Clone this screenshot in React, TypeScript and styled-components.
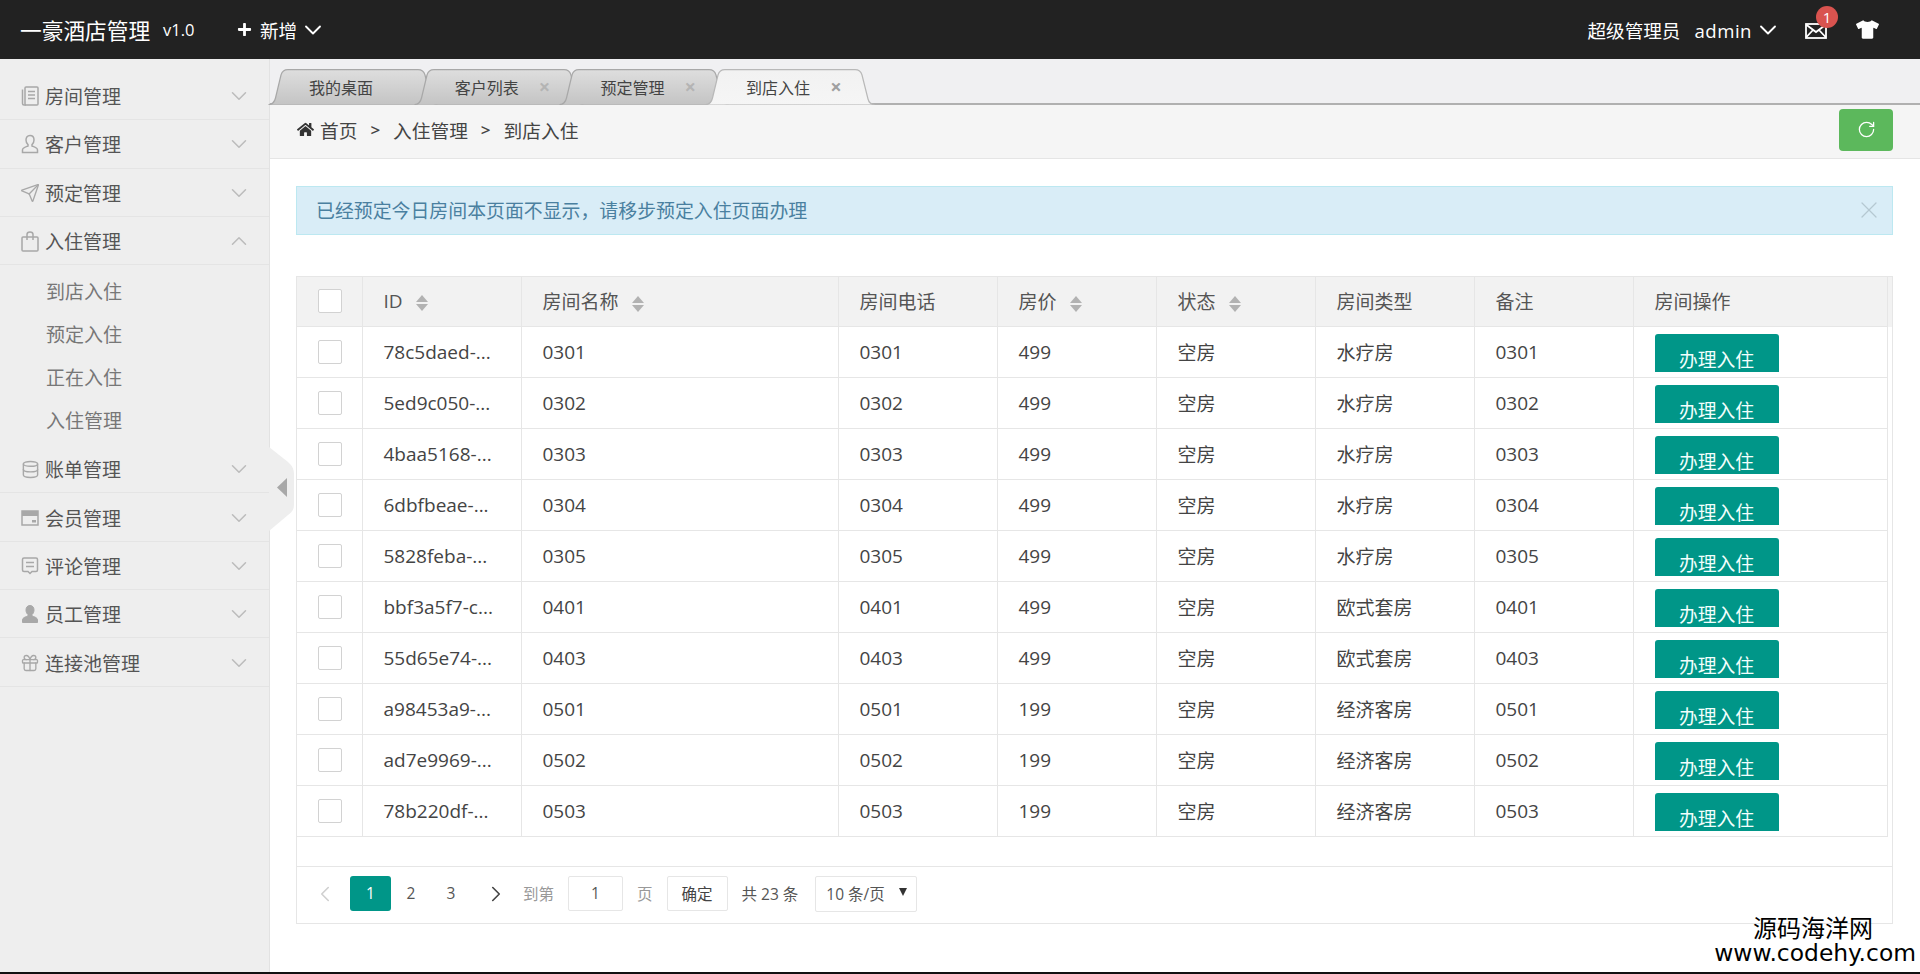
import React, { useId } from "react";
import styled, { createGlobalStyle } from "styled-components";
import {
  ChevronDown,
  ChevronLeft,
  ChevronRight,
  ChevronUp,
  Database,
  Gift,
  RotateCw,
  Send,
  X,
} from "lucide-react";
import { FaHome, FaPlus, FaTshirt } from "react-icons/fa";

const GlobalStyle = createGlobalStyle`
  html, body {
    margin: 0;
    padding: 0;
    background: #fff;
  }
  body {
    font-family: "Open Sans", "Noto Sans CJK SC", sans-serif;
    color: #555;
  }
  * {
    box-sizing: border-box;
  }
`;

const Page = styled.div`
  height: 974px;
  display: flex;
  flex-direction: column;
  border-bottom: 2px solid #111;
  overflow: hidden;
  position: relative;
`;

const Header = styled.header`
  height: 59px;
  flex: none;
  background: #222;
  color: #fff;
  display: flex;
  align-items: center;
  padding: 0 41px 0 20px;
`;

const Logo = styled.div`
  font-size: 21.7px;
  width: 143px;
  white-space: nowrap;
`;

const Version = styled.div`
  font-size: 16.500px;
  width: 74px;
`;

const HeaderLink = styled.div`
  display: flex;
  align-items: center;
  font-size: 18.6px;
  gap: 2px;
`;

const HeaderPlus = styled(FaPlus)`
  margin-right: 6px;
`;

const Spacer = styled.div`
  flex: 1;
`;

const UserName = styled.span`
  margin-left: 14px;
  letter-spacing: 0.5px;
`;

const MailWrap = styled.div`
  position: relative;
  width: 22px;
  height: 16px;
  margin-left: 23px;
`;

const Badge = styled.span`
  position: absolute;
  left: 11px;
  top: -16px;
  width: 22px;
  height: 22px;
  border-radius: 50%;
  background: #d9534f;
  color: #fff;
  font-size: 15px;
  line-height: 22px;
  text-align: center;
`;

const Shirt = styled(FaTshirt)`
  margin-left: 29px;
  font-size: 23px;
`;

const Body = styled.div`
  flex: 1;
  display: flex;
  min-height: 0;
`;

const Sidebar = styled.nav`
  width: 270px;
  flex: none;
  background: #eee;
  border-right: 1px solid #e2e2e2;
  padding-top: 13px;
`;

const MenuItem = styled.div`
  height: 48.3px;
  display: flex;
  align-items: center;
  padding: 1px 17px 0 21px;
  border-bottom: 1px solid #e4e4e4;
  font-size: 19px;
  color: #555;
`;

const MenuIcon = styled.span`
  width: 18px;
  height: 20px;
  flex: none;
  display: flex;
  align-items: center;
  justify-content: center;
  color: #a8a8a8;
  svg {
    flex: none;
  }
`;

const MenuChevron = styled.span`
  display: flex;
  color: #bcbcbc;
`;

const MenuLabel = styled.span`
  margin-left: 6px;
  flex: 1;
`;

const SubMenu = styled.div`
  padding: 6px 0 2px;
`;

const SubItem = styled.div`
  height: 43px;
  line-height: 43px;
  padding-left: 46px;
  font-size: 19px;
  color: #777;
`;

const Main = styled.main`
  flex: 1;
  min-width: 0;
  position: relative;
`;

const CollapseHandle = styled.svg`
  position: absolute;
  left: -1px;
  top: 388px;
`;

const TabBar = styled.div`
  height: 46px;
  background: #f0f0f2;
  border-bottom: 2px solid #b0b0b0;
  padding: 10px 0 0 0;
  display: flex;
`;

const TabItem = styled.div<{ $active?: boolean; $first?: boolean }>`
  position: relative;
  width: 170px;
  height: 36px;
  flex: none;
  margin-left: ${(p) => (p.$first ? "-2px" : "-24.3px")};
  z-index: ${(p) => (p.$active ? 5 : 1)};
  display: flex;
  align-items: center;
  padding: 0 0 0 41px;
  font-size: 16px;
  color: #444;
`;

const TabShapeSvg = styled.svg`
  position: absolute;
  left: 0;
  top: 0;
`;

const TabText = styled.span`
  position: relative;
`;

const TabClose = styled.span<{ $active?: boolean }>`
  position: relative;
  margin-left: 20px;
  font-size: 20px;
  line-height: 1;
  font-weight: bold;
  color: ${(p) => (p.$active ? "#a0a0a0" : "#b4b4b4")};
`;

const Crumbs = styled.div`
  height: 54px;
  background: #f5f5f5;
  border-bottom: 1px solid #e5e5e5;
  padding: 0 27px 4px;
  display: flex;
  align-items: center;
  font-size: 18.7px;
  color: #444;
`;

const CrumbSep = styled.span`
  margin: 0 13px;
  font-size: 17px;
  font-weight: 600;
`;

const CrumbHome = styled(FaHome)`
  font-size: 17px;
  margin-right: 6px;
  color: #333;
`;

const RefreshButton = styled.button`
  width: 54px;
  height: 42px;
  border: 0;
  border-radius: 4px;
  background: #5cb85c;
  color: #fff;
  display: flex;
  align-items: center;
  justify-content: center;
  margin-left: auto;
  padding: 0;
`;

const Content = styled.div`
  padding: 27px 27px 0 26px;
`;

const Alert = styled.div`
  height: 49px;
  background: #d9edf7;
  border: 1px solid #bce8f1;
  color: #4a80a0;
  font-size: 18.9px;
  display: flex;
  align-items: center;
  justify-content: space-between;
  padding: 0 9px 1px 19px;
  svg {
    color: #b5c8d2;
  }
`;

const TableBox = styled.div`
  margin-top: 41px;
  border: 1px solid #e6e6e6;
  border-top: 0;
  width: 1597px;
`;

const HeadWrap = styled.div`
  background: #f2f2f2;
  border-top: 1px solid #e6e6e6;
`;

const BodyWrap = styled.div`
  height: 540px;
  border-bottom: 1px solid #e6e6e6;
`;

const Table = styled.table`
  table-layout: fixed;
  border-collapse: collapse;
  width: 1590px;
`;

const Col = styled.col<{ $w: number }>`
  width: ${(p) => p.$w}px;
`;

const Th = styled.th`
  height: 49px;
  padding: 0 0 0 21px;
  text-align: left;
  font-weight: normal;
  font-size: 19px;
  color: #555;
  border: 1px solid #e6e6e6;
  border-top: 0;
  border-left: 0;
  white-space: nowrap;
`;

const Td = styled.td`
  height: 51px;
  padding: 0 0 0 21px;
  font-size: 19px;
  color: #444;
  border: 1px solid #e6e6e6;
  border-left: 0;
  border-top: 0;
  white-space: nowrap;
  overflow: hidden;
`;

const CheckCell = styled.div`
  width: 24px;
  height: 24px;
  background: #fff;
  border: 1px solid #d2d2d2;
  border-radius: 2px;
`;

const SortCaret = styled.span`
  display: inline-flex;
  flex-direction: column;
  gap: 2px;
  margin: -8px 0 -8px 13px;
  vertical-align: middle;
  &::before,
  &::after {
    content: "";
    width: 0;
    height: 0;
    border-left: 6.5px solid transparent;
    border-right: 6.5px solid transparent;
  }
  &::before {
    border-bottom: 7px solid #b2b2b2;
  }
  &::after {
    border-top: 7px solid #b2b2b2;
  }
`;

const ActionClip = styled.div`
  height: 38px;
  overflow: hidden;
  width: 124px;
  margin-top: 2px;
  border-radius: 3px 3px 0 0;
`;

const ActionButton = styled.button`
  display: block;
  width: 124px;
  height: 52px;
  border: 0;
  padding: 0;
  background: #009688;
  color: #f2fffd;
  font: inherit;
  font-size: 18.8px;
  line-height: 52px;
`;

const PageBar = styled.div`
  height: 56px;
  display: flex;
  align-items: center;
  padding: 0 0 2px 22px;
  font-size: 15.5px;
  color: #555;
`;

const PrevIcon = styled(ChevronLeft)`
  color: #d0d0d0;
  margin-left: -7px;
`;

const PageList = styled.div`
  display: flex;
  align-items: center;
  margin-left: 12px;
`;

const PageNum = styled.span<{ $current?: boolean }>`
  width: ${(p) => (p.$current ? 41 : 40)}px;
  height: 35px;
  line-height: 35px;
  text-align: center;
  border-radius: 3px;
  background: ${(p) => (p.$current ? "#009688" : "transparent")};
  color: ${(p) => (p.$current ? "#fff" : "#555")};
`;

const NextIcon = styled(ChevronRight)`
  color: #444;
  margin-left: 12px;
`;

const SkipGroup = styled.div`
  display: flex;
  align-items: center;
  gap: 14px;
  margin-left: 14px;
`;

const Muted = styled.span`
  color: #999;
`;

const PageInput = styled.div`
  width: 55px;
  height: 35px;
  line-height: 33px;
  border: 1px solid #e6e6e6;
  border-radius: 2px;
  text-align: center;
`;

const ConfirmButton = styled.div`
  width: 61px;
  height: 35px;
  line-height: 34px;
  border: 1px solid #e6e6e6;
  border-radius: 2px;
  text-align: center;
  color: #444;
`;

const SizeSelect = styled.div`
  width: 102px;
  height: 36px;
  border: 1px solid #e6e6e6;
  border-radius: 2px;
  display: flex;
  align-items: center;
  justify-content: space-between;
  padding: 0 9px 0 10px;
  margin-left: 3px;
`;

const Caret = styled.span`
  width: 0;
  height: 0;
  border-left: 4.500px solid transparent;
  border-right: 4.500px solid transparent;
  border-top: 8px solid #333;
  margin-top: -4px;
`;

const Watermark = styled.div`
  position: absolute;
  right: 4px;
  bottom: 7px;
  color: #000;
  text-align: right;
  pointer-events: none;
`;

const WatermarkCn = styled.div`
  font-size: 24px;
  line-height: 26px;
  margin-right: 43px;
`;

const WatermarkUrl = styled.div`
  font-family: "DejaVu Sans", sans-serif;
  font-size: 23.4px;
  line-height: 24px;
`;

const TabShape = ({ active }: { active?: boolean }) => {
  const id = useId();
  return (
    <TabShapeSvg width="170" height="36" viewBox="0 0 170 36">
      <defs>
        <linearGradient id={id} x1="0" y1="0" x2="0" y2="1">
          <stop offset="0" stopColor={active ? "#f2f2f2" : "#dedede"} />
          <stop offset="1" stopColor={active ? "#f5f5f5" : "#c4c4c4"} />
        </linearGradient>
      </defs>
      <path
        d="M0.5 35.5C5 35.5 6.500 33 7.500 29L13 6Q14.500 0.700 20 0.700L150 0.700Q155.500 0.700 157 6L163 30Q164.500 35.500 169.500 35.500"
        fill={`url(#${id})`}
        stroke={active ? "#b8b8b8" : "#a8a8a8"}
        strokeWidth="1.2"
      />
    </TabShapeSvg>
  );
};

const MailIcon = () => (
  <svg width="22" height="16" viewBox="0 0 22 16" fill="none" stroke="#fff" strokeWidth="1.8">
    <rect x="1" y="1" width="20" height="14" />
    <path d="M1 1.500L11 9L21 1.500M1 14.500L8 7M21 14.500L14 7" />
  </svg>
);

const DocIcon = () => (
  <svg width="18" height="20" viewBox="0 0 18 20" fill="none" stroke="currentColor" strokeWidth="1.5">
    <rect x="4" y="1" width="13" height="18" rx="1" />
    <path d="M1.500 3.500V17.500Q1.500 19 3 19H5M7 5.500H14M7 9H14M7 12.500H14" />
  </svg>
);

const userPath =
  "M9 1.500C6.400 1.500 5 3.500 5 6C5 8 5.800 9.600 7 10.600V12C5 12.800 1.500 13.500 1.500 16V18.500H16.500V16C16.500 13.500 13 12.800 11 12V10.600C12.200 9.600 13 8 13 6C13 3.500 11.600 1.500 9 1.500Z";

const UserOutlineIcon = () => (
  <svg width="18" height="20" viewBox="0 0 18 20" fill="none" stroke="currentColor" strokeWidth="1.5">
    <path d={userPath} />
  </svg>
);

const UserSolidIcon = () => (
  <svg width="18" height="20" viewBox="0 0 18 20" fill="currentColor" stroke="currentColor" strokeWidth="1">
    <path d={userPath} />
  </svg>
);

const BagIcon = () => (
  <svg width="18" height="21" viewBox="0 0 18 21" fill="none" stroke="currentColor" strokeWidth="1.5">
    <rect x="1" y="6" width="16" height="14" rx="1" />
    <path d="M6 9V3.500Q6 1 9 1Q12 1 12 3.500V9" />
  </svg>
);

const CardIcon = () => (
  <svg width="18" height="16" viewBox="0 0 18 16">
    <path d="M1 1H17V15H1Z" fill="none" stroke="currentColor" strokeWidth="1.5" />
    <path d="M1 1H17V6H1ZM11 10H15V12.500H11Z" fill="currentColor" />
  </svg>
);

const CommentIcon = () => (
  <svg width="18" height="20" viewBox="0 0 18 20" fill="none" stroke="currentColor" strokeWidth="1.5">
    <path d="M3 2H15Q16.500 2 16.500 3.500V14Q16.500 15.500 15 15.500H11L9 17.500L7 15.500H3Q1.500 15.500 1.500 14V3.500Q1.500 2 3 2Z" />
    <path d="M5 6.500H13M5 10.500H13" />
  </svg>
);

const menuTop = [
  { label: "房间管理", icon: <DocIcon /> },
  { label: "客户管理", icon: <UserOutlineIcon /> },
  { label: "预定管理", icon: <Send size={20} strokeWidth={1.6} /> },
];

const menuBottom = [
  { label: "账单管理", icon: <Database size={19} strokeWidth={1.8} /> },
  { label: "会员管理", icon: <CardIcon /> },
  { label: "评论管理", icon: <CommentIcon /> },
  { label: "员工管理", icon: <UserSolidIcon /> },
  { label: "连接池管理", icon: <Gift size={20} strokeWidth={1.6} /> },
];

const subMenu = ["到店入住", "预定入住", "正在入住", "入住管理"];

const tabs = [
  { label: "我的桌面", first: true },
  { label: "客户列表" },
  { label: "预定管理" },
  { label: "到店入住", active: true },
];

const colWidths = [65, 159, 317, 159, 159, 159, 159, 159, 254];

const rooms = [
  ["78c5daed-...", "0301", "499", "水疗房"],
  ["5ed9c050-...", "0302", "499", "水疗房"],
  ["4baa5168-...", "0303", "499", "水疗房"],
  ["6dbfbeae-...", "0304", "499", "水疗房"],
  ["5828feba-...", "0305", "499", "水疗房"],
  ["bbf3a5f7-c...", "0401", "499", "欧式套房"],
  ["55d65e74-...", "0403", "499", "欧式套房"],
  ["a98453a9-...", "0501", "199", "经济客房"],
  ["ad7e9969-...", "0502", "199", "经济客房"],
  ["78b220df-...", "0503", "199", "经济客房"],
];

const Cols = () => (
  <colgroup>
    {colWidths.map((w, i) => (
      <Col key={i} $w={w} />
    ))}
  </colgroup>
);

const App = () => {
  return (
    <Page>
      <GlobalStyle />
      <Header>
        <Logo>一豪酒店管理</Logo>
        <Version>v1.0</Version>
        <HeaderLink>
          <HeaderPlus size={15} />
          新增
          <ChevronDown size={28} strokeWidth={1.6} />
        </HeaderLink>
        <Spacer />
        <HeaderLink>
          <span>
            超级管理员<UserName>admin</UserName>
          </span>
          <ChevronDown size={28} strokeWidth={1.6} />
        </HeaderLink>
        <MailWrap>
          <MailIcon />
          <Badge>1</Badge>
        </MailWrap>
        <Shirt />
      </Header>
      <Body>
        <Sidebar>
          {menuTop.map((m) => (
            <MenuItem key={m.label}>
              <MenuIcon>{m.icon}</MenuIcon>
              <MenuLabel>{m.label}</MenuLabel>
              <MenuChevron>
                <ChevronDown size={26} strokeWidth={1.4} />
              </MenuChevron>
            </MenuItem>
          ))}
          <MenuItem>
            <MenuIcon>
              <BagIcon />
            </MenuIcon>
            <MenuLabel>入住管理</MenuLabel>
            <MenuChevron>
              <ChevronUp size={26} strokeWidth={1.4} />
            </MenuChevron>
          </MenuItem>
          <SubMenu>
            {subMenu.map((s) => (
              <SubItem key={s}>{s}</SubItem>
            ))}
          </SubMenu>
          {menuBottom.map((m) => (
            <MenuItem key={m.label}>
              <MenuIcon>{m.icon}</MenuIcon>
              <MenuLabel>{m.label}</MenuLabel>
              <MenuChevron>
                <ChevronDown size={26} strokeWidth={1.4} />
              </MenuChevron>
            </MenuItem>
          ))}
        </Sidebar>
        <Main>
          <CollapseHandle width="25" height="84" viewBox="0 0 25 84">
            <path d="M0 0L19 15Q25 20 25 27V58Q25 64 19 68L0 84Z" fill="#eee" />
            <path d="M18 31V50L8 40.500Z" fill="#a8a8a8" />
          </CollapseHandle>
          <TabBar>
            {tabs.map((t) => (
              <TabItem key={t.label} $active={t.active} $first={t.first}>
                <TabShape active={t.active} />
                <TabText>{t.label}</TabText>
                {!t.first && <TabClose $active={t.active}>×</TabClose>}
              </TabItem>
            ))}
          </TabBar>
          <Crumbs>
            <CrumbHome />
            首页
            <CrumbSep>&gt;</CrumbSep>
            入住管理
            <CrumbSep>&gt;</CrumbSep>
            到店入住
            <RefreshButton>
              <RotateCw size={19} strokeWidth={1.6} />
            </RefreshButton>
          </Crumbs>
          <Content>
            <Alert>
              已经预定今日房间本页面不显示，请移步预定入住页面办理
              <X size={28} strokeWidth={1.1} />
            </Alert>
            <TableBox>
              <HeadWrap>
                <Table>
                  <Cols />
                  <thead>
                    <tr>
                      <Th>
                        <CheckCell />
                      </Th>
                      <Th>
                        ID
                        <SortCaret />
                      </Th>
                      <Th>
                        房间名称
                        <SortCaret />
                      </Th>
                      <Th>房间电话</Th>
                      <Th>
                        房价
                        <SortCaret />
                      </Th>
                      <Th>
                        状态
                        <SortCaret />
                      </Th>
                      <Th>房间类型</Th>
                      <Th>备注</Th>
                      <Th>房间操作</Th>
                    </tr>
                  </thead>
                </Table>
              </HeadWrap>
              <BodyWrap>
                <Table>
                  <Cols />
                  <tbody>
                    {rooms.map(([id, no, price, type]) => (
                      <tr key={id}>
                        <Td>
                          <CheckCell />
                        </Td>
                        <Td>{id}</Td>
                        <Td>{no}</Td>
                        <Td>{no}</Td>
                        <Td>{price}</Td>
                        <Td>空房</Td>
                        <Td>{type}</Td>
                        <Td>{no}</Td>
                        <Td>
                          <ActionClip>
                            <ActionButton>办理入住</ActionButton>
                          </ActionClip>
                        </Td>
                      </tr>
                    ))}
                  </tbody>
                </Table>
              </BodyWrap>
              <PageBar>
                <PrevIcon size={26} strokeWidth={1.5} />
                <PageList>
                  <PageNum $current>1</PageNum>
                  <PageNum>2</PageNum>
                  <PageNum>3</PageNum>
                </PageList>
                <NextIcon size={26} strokeWidth={1.5} />
                <SkipGroup>
                  <Muted>到第</Muted>
                  <PageInput>1</PageInput>
                  <Muted>页</Muted>
                  <ConfirmButton>确定</ConfirmButton>
                  <span>共 23 条</span>
                  <SizeSelect>
                    10 条/页
                    <Caret />
                  </SizeSelect>
                </SkipGroup>
              </PageBar>
            </TableBox>
          </Content>
        </Main>
      </Body>
      <Watermark>
        <WatermarkCn>源码海洋网</WatermarkCn>
        <WatermarkUrl>www.codehy.com</WatermarkUrl>
      </Watermark>
    </Page>
  );
};

export default App;
